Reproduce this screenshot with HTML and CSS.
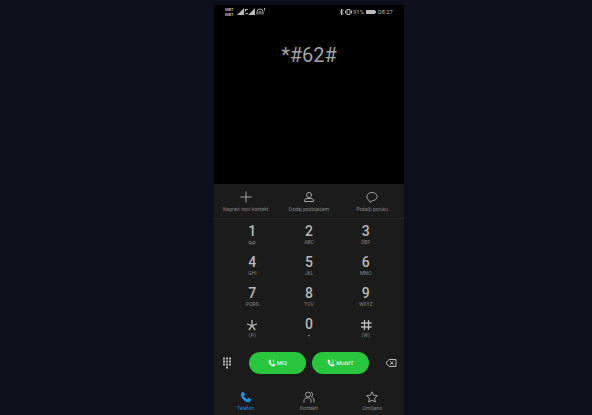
FILE: index.html
```
<!DOCTYPE html>
<html lang="sr">
<head>
    <meta charset="UTF-8">
    <meta name="viewport" content="width=device-width, initial-scale=1.0">
    <title>Telefon</title>
    <link rel="stylesheet" href="styles.css">
</head>
<body>
    <svg width="0" height="0" class="defs" aria-hidden="true">
        <symbol id="handset" viewBox="0 0 24 24">
            <path d="M6 1.500C3.500 2.200 1.500 4.500 1.700 7.500C2.200 14.500 9.500 21.800 16.500 22.300C19.500 22.500 21.800 20.500 22.500 18C22.600 17.400 22.400 17 22 16.700L17.800 14.200C17.200 13.900 16.600 14 16.200 14.500L14.600 16.600C11.500 15.200 8.800 12.500 7.400 9.400L9.500 7.800C10 7.400 10.100 6.800 9.800 6.200L7.300 2C7 1.500 6.500 1.300 6 1.500Z"/>
        </symbol>
    </svg>

    <main class="phone">
        <header class="status">
            <span class="carriers"><span>MBT</span><span>MBT</span></span>
            <svg class="signals" viewBox="0 0 30 8" aria-hidden="true">
                <path d="M0 7L7 0V7ZM11 7L18 0V7Z"/>
                <path class="line" d="M8.500 1.500H11M8.500 1V3.500M8.500 5.500H11M20 6.500V4A3 3 0 0 1 26 4V6.500M22 6.500V4.500A1 1 0 0 1 24 4.500V6.500M27.500 0V2.500"/>
            </svg>
            <svg class="alerts" viewBox="0 0 14 8" aria-hidden="true">
                <path class="line" d="M1 2.500L4 5.500L2.500 7V1L4 2.500L1 5.500M8 1.500H11V6.500H8ZM6.500 2.500V5.500M12.500 2.500V5.500"/>
            </svg>
            <span>91%</span>
            <svg class="battery" viewBox="0 0 11 6" aria-hidden="true">
                <path d="M0 1H9V5H0ZM9 2H10V4H9Z"/>
            </svg>
            <span>08:27</span>
        </header>

        <output class="number">*#62#</output>

        <div class="actions">
            <button>
                <svg viewBox="0 0 12 12" aria-hidden="true"><path d="M6 .5V11.500M.5 6H11.500"/></svg>
                Napravi novi kontakt
            </button>
            <button>
                <svg viewBox="0 0 12 12" aria-hidden="true"><circle cx="6" cy="4" r="2.500"/><path d="M4 7.500H8C9.500 7.500 10.500 8.500 10.500 10V10.500H1.500V10C1.500 8.500 2.500 7.500 4 7.500Z"/></svg>
                Dodaj postojećem
            </button>
            <button>
                <svg viewBox="0 0 12 12" aria-hidden="true"><path d="M3 9.500C-.8 7 .8 1.500 6 1.500C12.500 1.500 12.800 9.500 6.500 9.500L4 11.300L3 9.500Z"/></svg>
                Pošalji poruku
            </button>
        </div>

        <div class="keypad">
            <button>1<small><svg class="voicemail" viewBox="0 0 8 4" aria-label="voicemail"><circle cx="2" cy="2" r="1.300"/><circle cx="6" cy="2" r="1.300"/><path d="M2 3.300H6"/></svg></small></button>
            <button>2<small>ABC</small></button>
            <button>3<small>DEF</small></button>
            <button>4<small>GHI</small></button>
            <button>5<small>JKL</small></button>
            <button>6<small>MNO</small></button>
            <button>7<small>PQRS</small></button>
            <button>8<small>TUV</small></button>
            <button>9<small>WXYZ</small></button>
            <button aria-label="*"><svg class="symbol" viewBox="0 0 12 15" aria-hidden="true"><path d="M6 3V8.500M1 7L6 8.500L11 7M2.800 13L6 8.500L9.200 13"/></svg><small>(P)</small></button>
            <button>0<small>+</small></button>
            <button aria-label="#"><svg class="symbol" viewBox="0 0 12 15" aria-hidden="true"><path d="M4.500 3V13M8.500 3V13M1 6H11.500M1 10H11.500"/></svg><small>(W)</small></button>
        </div>

        <div class="calls">
            <button class="tool" aria-label="Tastatura">
                <svg class="dots" viewBox="0 0 10 12" aria-hidden="true"><path d="M1 1.500H3M4 1.500H6M7 1.500H9M1 4.500H3M4 4.500H6M7 4.500H9M1 7.500H3M4 7.500H6M7 7.500H9M4 10.500H6"/></svg>
            </button>
            <button class="call">
                <svg viewBox="0 0 24 24" aria-hidden="true"><use href="#handset"/><path class="sim" d="M14 4L17 2V11"/></svg>
                MI2
            </button>
            <button class="call">
                <svg viewBox="0 0 24 24" aria-hidden="true"><use href="#handset"/><path class="sim" d="M14 4C15 1 20 2 19 5C18.500 7 15 9 14 11H20"/></svg>
                MobIT
            </button>
            <button class="tool" aria-label="Obriši">
                <svg class="erase" viewBox="0 0 12 9" aria-hidden="true"><path d="M4 1H11V8H4L1 4.500ZM5 2.800L8.500 6.200M8.500 2.800L5 6.200"/></svg>
            </button>
        </div>

        <nav class="tabs">
            <a href="#telefon" class="active">
                <svg viewBox="0 0 24 24" aria-hidden="true"><use href="#handset"/></svg>
                Telefon
            </a>
            <a href="#kontakti">
                <svg viewBox="0 0 12 12" aria-hidden="true"><circle cx="5" cy="3.500" r="2.500"/><path d="M1 11.500V9.500C1 7.800 2 7 3.500 7H5.500C7 7 8 7.800 8 9.500V11.500M8 1C10 1.500 10 5 8.500 6C10 6.500 11 7.500 11 9V11.500"/></svg>
                Kontakti
            </a>
            <a href="#omiljeno">
                <svg viewBox="0 0 12 12" aria-hidden="true"><path d="M6 .8L7.600 4.200L11.300 4.700L8.600 7.300L9.300 11L6 9.200L2.700 11L3.400 7.300L.7 4.700L4.400 4.200Z"/></svg>
                Omiljeno
            </a>
        </nav>
    </main>
</body>
</html>
```
FILE: styles.css
```
:root {
    --page: #0b101a;
    --panel: #1b1b1b;
    --text: #b8b8b8;
    --muted: #858585;
    --green: #27c63c;
    --blue: #1b91df;
}

* {
    box-sizing: border-box;
}

body {
    margin: 0;
    padding-top: 5px;
    min-height: 100vh;
    background-color: var(--page);
    color: var(--text);
    font-family: Roboto, sans-serif;
    font-size: 5px;
    line-height: 6px;
    display: flex;
    justify-content: center;
}

.defs {
    position: absolute;
}

button {
    margin: 0;
    padding: 0;
    border: none;
    background: none;
    color: inherit;
    font: inherit;
    cursor: pointer;
}

svg {
    display: block;
    fill: none;
    stroke: currentColor;
}

.phone {
    width: 100%;
    max-width: 190px;
    margin-left: 26px;
    display: flex;
    flex-direction: column;
    background-color: var(--panel);
}

.status {
    display: flex;
    align-items: center;
    height: 14px;
    padding: 0 11px;
    background-color: #000;
    font-size: 6px;
}

.carriers {
    display: flex;
    flex-direction: column;
    margin-right: 4px;
    font-size: 4px;
    font-weight: 700;
    line-height: 5px;
}

.status svg {
    fill: currentColor;
    stroke: none;
}

.status .line {
    fill: none;
    stroke: currentColor;
}

.signals {
    width: 30px;
    height: 8px;
}

.alerts {
    width: 14px;
    height: 8px;
    margin-left: auto;
}

.battery {
    width: 11px;
    height: 6px;
    margin: 0 1px 0 2px;
}

.number {
    flex: 1;
    min-height: 120px;
    padding-top: 24px;
    background-color: #000;
    color: #a4a4a4;
    font-size: 20px;
    line-height: 24px;
    text-align: center;
}

.actions,
.tabs {
    display: grid;
    grid-template-columns: repeat(3, 1fr);
}

.actions {
    height: 35px;
    border-bottom: 1px solid #252525;
    color: var(--muted);
}

.actions button,
.tabs a {
    display: flex;
    flex-direction: column;
    align-items: center;
    justify-content: center;
    gap: 3px;
    white-space: nowrap;
}

.actions svg,
.tabs svg {
    width: 12px;
    height: 12px;
    color: #a4a4a4;
}

.keypad {
    display: grid;
    grid-template-columns: repeat(3, 1fr);
    row-gap: 5px;
    padding: 5px 10px;
}

.keypad button {
    display: flex;
    flex-direction: column;
    align-items: center;
    font-size: 14px;
    font-weight: 500;
    line-height: 15px;
    height: 26px;
}

.keypad small {
    height: 7px;
    color: var(--muted);
    font-size: 5px;
    font-weight: 400;
    line-height: 7px;
}

.symbol {
    width: 12px;
    height: 15px;
    stroke-width: 1.3;
}

.voicemail {
    width: 8px;
    height: 7px;
    stroke-width: 0.7;
}

.calls {
    display: flex;
    align-items: center;
    gap: 6px;
    padding: 4px 7px 0;
}

.call {
    display: flex;
    align-items: center;
    justify-content: center;
    gap: 1px;
    width: 57px;
    height: 22px;
    border-radius: 11px;
    background-color: var(--green);
    color: #e2f7e4;
    font-size: 6px;
    font-weight: 500;
}

.call svg {
    width: 8px;
    height: 8px;
    fill: currentColor;
    stroke: none;
}

.call .sim {
    fill: none;
    stroke: currentColor;
    stroke-width: 2;
}

.tool {
    flex: 1;
}

.tool svg {
    width: 12px;
    height: 12px;
}

.tool .dots {
    stroke-width: 2;
}

.tool .erase {
    margin-left: auto;
}

.tabs {
    height: 41px;
    padding-top: 12px;
}

.tabs a {
    gap: 2px;
    color: var(--muted);
    text-decoration: none;
}

.tabs .active,
.tabs .active svg {
    color: var(--blue);
}

.tabs .active svg {
    fill: currentColor;
    stroke: none;
}
```
